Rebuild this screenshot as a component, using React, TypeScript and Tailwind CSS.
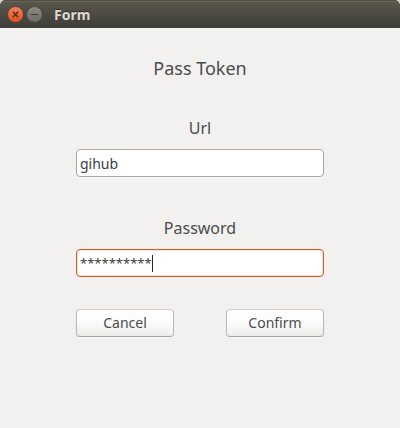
import React, { useState } from "react";

type FieldProps = {
  id: string;
  label: string;
  children: React.ReactNode;
};

function Field({ id, label, children }: FieldProps) {
  return (
    <div className="flex flex-col gap-[9px]">
      <label htmlFor={id} className="text-center text-base leading-6">
        {label}
      </label>
      {children}
    </div>
  );
}

function DialogButton({ children }: { children: React.ReactNode }) {
  return (
    <button
      type="button"
      className="h-7 w-[98px] rounded-[4px] border border-[#b9b7b3] border-t-[#d0cecb] border-b-[#a5a39f] bg-linear-to-b from-white via-[#fbfbfb] to-[#ececeb] text-sm leading-6 shadow-[0_1px_0_#f9f9f8]"
    >
      {children}
    </button>
  );
}

function TitleBar() {
  return (
    <header className="flex h-7 items-center rounded-t-md bg-linear-to-b from-[#5b584c] to-[#3e3d38] px-[7px] pt-px shadow-[inset_0_1px_0_#504d41,inset_0_2px_0_#69665a]">
      <button type="button" aria-label="Close">
        <svg width="17" height="17" viewBox="0 0 16 16" className="block">
          <defs>
            <linearGradient id="closeFill" x1="0" y1="0" x2="0" y2="1">
              <stop offset="0" stopColor="#f3825b" />
              <stop offset="1" stopColor="#e25019" />
            </linearGradient>
          </defs>
          <circle cx="8" cy="8" r="7.5" fill="url(#closeFill)" stroke="#3a3832" strokeWidth="0.7" />
          <path d="M5.5 5.5l5 5M10.5 5.5l-5 5" stroke="#4c2a1c" strokeWidth="1.3" />
        </svg>
      </button>
      <button type="button" aria-label="Minimize" className="ml-0.5">
        <svg width="17" height="17" viewBox="0 0 16 16" className="block">
          <defs>
            <linearGradient id="minFill" x1="0" y1="0" x2="0" y2="1">
              <stop offset="0" stopColor="#8c8b85" />
              <stop offset="1" stopColor="#6c6b66" />
            </linearGradient>
          </defs>
          <circle cx="8" cy="8" r="7.5" fill="url(#minFill)" stroke="#3a3832" strokeWidth="0.7" />
          <path d="M4.5 8h7" stroke="#3a3935" strokeWidth="1" />
        </svg>
      </button>
      <span className="ml-[11px] text-sm font-bold text-[#dfdbd2] [text-shadow:0_-1px_0_#33322d]">Form</span>
    </header>
  );
}

export default function App() {
  const [url, setUrl] = useState("gihub");
  const [password, setPassword] = useState("**********");

  return (
    <div className="min-h-screen bg-[#f2f1f0] font-['Noto_Sans',sans-serif] text-[#4c4c4c]">
      <div className="bg-[#d5d5d8]">
        <TitleBar />
      </div>
      <main className="px-19 pt-7">
        <h1 className="text-center text-lg leading-6">Pass Token</h1>
        <form className="mt-9 flex flex-col" onSubmit={(e) => e.preventDefault()}>
          <div className="flex flex-col gap-[39px]">
            <Field id="url" label="Url">
              <input
                id="url"
                type="text"
                value={url}
                onChange={(e) => setUrl(e.target.value)}
                className="h-7 w-full rounded-[4px] border border-[#aaa6a0] bg-white px-[3px] text-sm text-[#3c3c3c] shadow-[0_1px_0_#f9f9f8] outline-none"
              />
            </Field>
            <Field id="password" label="Password">
              <div className="relative">
                <input
                  id="password"
                  type="text"
                  autoComplete="off"
                  value={password}
                  onChange={(e) => setPassword(e.target.value)}
                  className="block h-7 w-full rounded-[4px] border border-[#d45a2f] bg-white px-[3px] text-[13px] text-[#3c3c3c] caret-transparent shadow-[inset_0_0_0_1px_#fae0d6] outline-none"
                />
                <span
                  aria-hidden="true"
                  className="pointer-events-none absolute inset-y-0 left-1 flex items-center text-[13px]"
                >
                  <span className="invisible">{password}</span>
                  <span className="h-[17px] w-px bg-[#2b2b2b]" />
                </span>
              </div>
            </Field>
          </div>
          <div className="mt-8 flex justify-between">
            <DialogButton>Cancel</DialogButton>
            <DialogButton>Confirm</DialogButton>
          </div>
        </form>
      </main>
    </div>
  );
}
